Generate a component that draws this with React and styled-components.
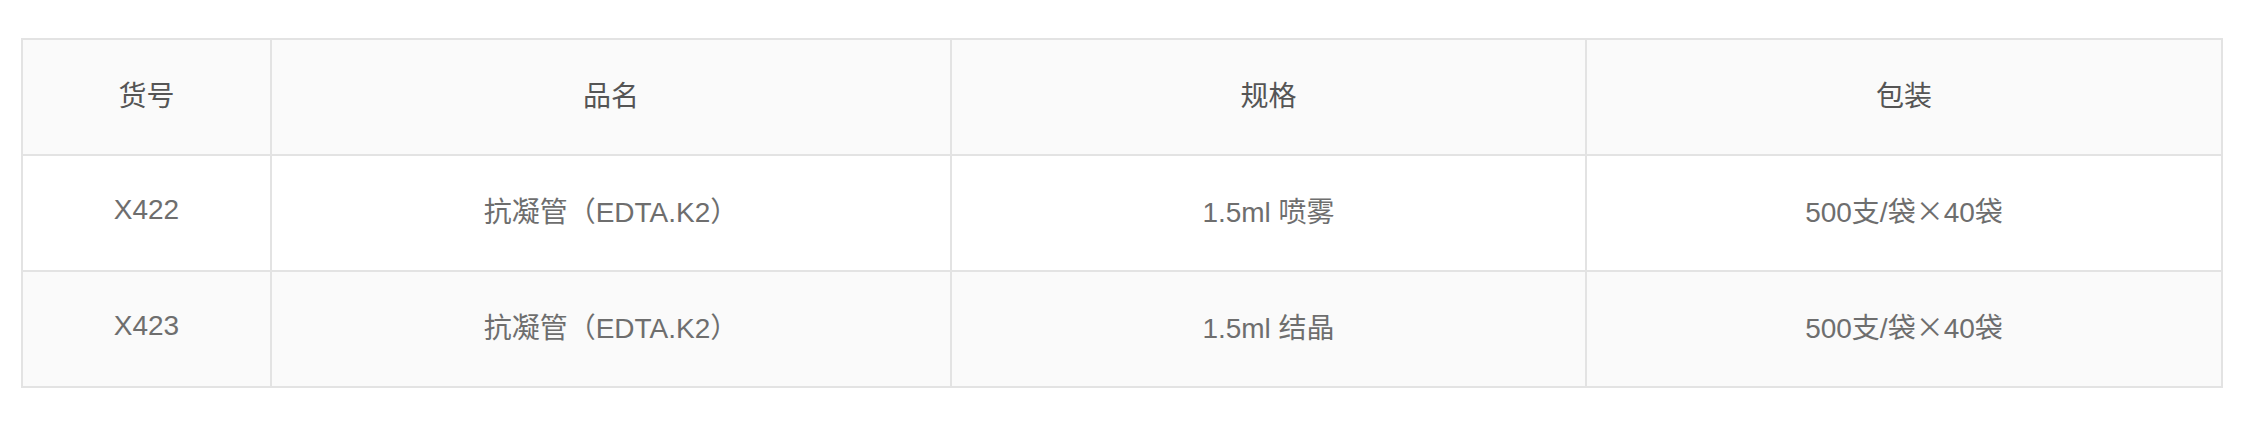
import React from "react";
import styled, { createGlobalStyle } from "styled-components";

const Global = createGlobalStyle`
  html, body { margin: 0; padding: 0; background: #ffffff; }
  body { font-family: "Liberation Sans", "Noto Sans CJK SC", sans-serif; }
`;

const Page = styled.div`
  padding: 38px 27px 0 21px;
`;

const Table = styled.table`
  width: 2200px;
  border-collapse: collapse;
  table-layout: fixed;
  border: 2px solid #e3e3e3;
  font-family: "Liberation Sans", "Noto Sans CJK SC", sans-serif;
  font-size: 28px;
`;

const Row = styled.tr`
  height: 116px;
  background: ${(p) => (p.$striped ? "#fafafa" : "#ffffff")};
`;

const Head = styled.th`
  border: 2px solid #e3e3e3;
  font-weight: normal;
  color: #555555;
  text-align: center;
  vertical-align: middle;
  padding: 0 0 7px;
`;

const Cell = styled.td`
  border: 2px solid #e3e3e3;
  color: #6e6e6e;
  text-align: center;
  vertical-align: middle;
  padding: 0 0 7px;
`;

const Times = styled.span`
  font-family: "Noto Sans CJK SC", sans-serif;
`;

const cols = [249, 680, 635, 636];
const headers = ["货号", "品名", "规格", "包装"];
const rows = [
  ["X422", "抗凝管（EDTA.K2）", "1.5ml 喷雾", ["500支/袋", "×", "40袋"]],
  ["X423", "抗凝管（EDTA.K2）", "1.5ml 结晶", ["500支/袋", "×", "40袋"]],
];

export default function App() {
  return (
    <Page>
      <Global />
      <Table>
        <colgroup>
          {cols.map((w, i) => (
            <col key={i} style={{ width: w }} />
          ))}
        </colgroup>
        <thead>
          <Row $striped>
            {headers.map((h) => (
              <Head key={h}>{h}</Head>
            ))}
          </Row>
        </thead>
        <tbody>
          {rows.map((r, i) => (
            <Row key={i} $striped={i % 2 === 1}>
              {r.map((c, j) => (
                <Cell key={j}>
                  {Array.isArray(c) ? (
                    <>
                      {c[0]}
                      <Times>{c[1]}</Times>
                      {c[2]}
                    </>
                  ) : (
                    c
                  )}
                </Cell>
              ))}
            </Row>
          ))}
        </tbody>
      </Table>
    </Page>
  );
}
